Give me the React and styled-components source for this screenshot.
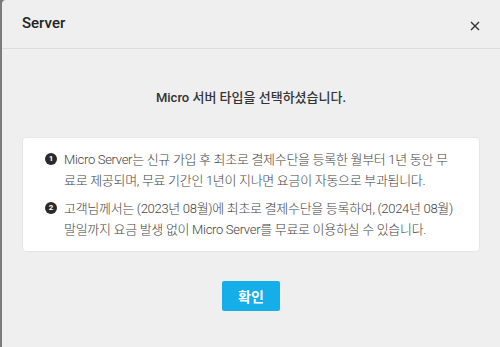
import styled, { createGlobalStyle } from "styled-components";

const GlobalStyle = createGlobalStyle`
  html, body {
    margin: 0;
    padding: 0;
    background: #7b7b7b;
    overflow: hidden;
  }
  body {
    font-family: Roboto, "Noto Sans CJK KR", sans-serif;
  }
`;

const SPage = styled.div`
  display: flex;
  height: 347px;
  padding-left: 2px;
`;
const SModal = styled.div`
  flex: 1;
  display: flex;
  flex-direction: column;
  background: #efefef;
  border-top-left-radius: 4px;
`;
const SHeader = styled.div`
  display: flex;
  align-items: center;
  justify-content: space-between;
  height: 49px;
  padding: 0 17px 0 20px;
  border-bottom: 1px solid #dcdcdc;
  box-sizing: border-box;
`;
const STitle = styled.h2`
  margin: 0 0 3px 0;
  font-size: 15px;
  font-weight: 500;
  color: #222;
`;
const SClose = styled.button`
  width: 16px;
  height: 16px;
  padding: 0;
  margin-top: 3px;
  border: none;
  background: none;
  display: flex;
  align-items: center;
  justify-content: center;
`;
const SBody = styled.div`
  display: flex;
  flex-direction: column;
  align-items: center;
  padding: 39px 20px 0 20px;
`;
const SMessage = styled.p`
  margin: 0;
  font-size: 13px;
  font-weight: 500;
  color: #333;
  line-height: 20px;
`;
const SCard = styled.div`
  align-self: stretch;
  margin-top: 29px;
  padding: 11px 25px 11px 22px;
  background: #fff;
  border: 1px solid #e6e6e6;
  border-radius: 4px;
  display: flex;
  flex-direction: column;
  gap: 7px;
`;
const SItem = styled.div`
  display: flex;
  gap: 7px;
  font-size: 13px;
  font-weight: 300;
  line-height: 21px;
  letter-spacing: -0.3px;
  color: #444;
  word-break: break-all;
`;
const SNum = styled.span`
  flex: none;
  width: 12px;
  height: 12px;
  margin-top: 4px;
  border-radius: 50%;
  background: #2a2a2a;
  color: #fff;
  font-size: 8px;
  font-weight: 700;
  line-height: 12px;
  letter-spacing: 0;
  text-align: center;
`;
const SText = styled.span`
  flex: 1;
  min-width: 0;
`;
const SButton = styled.button`
  margin-top: 29px;
  width: 58px;
  height: 30px;
  border: none;
  border-radius: 2px;
  background: #16aee8;
  color: #fff;
  font-family: Roboto, "Noto Sans CJK KR", sans-serif;
  font-size: 14px;
  font-weight: 700;
`;

const notes = [
  "Micro Server는 신규 가입 후 최초로 결제수단을 등록한 월부터 1년 동안 무료로 제공되며, 무료 기간인 1년이 지나면 요금이 자동으로 부과됩니다.",
  "고객님께서는 (2023년 08월)에 최초로 결제수단을 등록하여, (2024년 08월) 말일까지 요금 발생 없이 Micro Server를 무료로 이용하실 수 있습니다.",
];

const App = () => {
  return (
    <SPage>
      <GlobalStyle />
      <SModal>
        <SHeader>
          <STitle>Server</STitle>
          <SClose aria-label="close">
            <svg width="10" height="10" viewBox="0 0 10 10">
              <path d="M1 1L9 9M9 1L1 9" stroke="#333" strokeWidth="1.4" />
            </svg>
          </SClose>
        </SHeader>
        <SBody>
          <SMessage>Micro 서버 타입을 선택하셨습니다.</SMessage>
          <SCard>
            {notes.map((text, i) => (
              <SItem key={i}>
                <SNum>{i + 1}</SNum>
                <SText>{text}</SText>
              </SItem>
            ))}
          </SCard>
          <SButton>확인</SButton>
        </SBody>
      </SModal>
    </SPage>
  );
};

export default App;
